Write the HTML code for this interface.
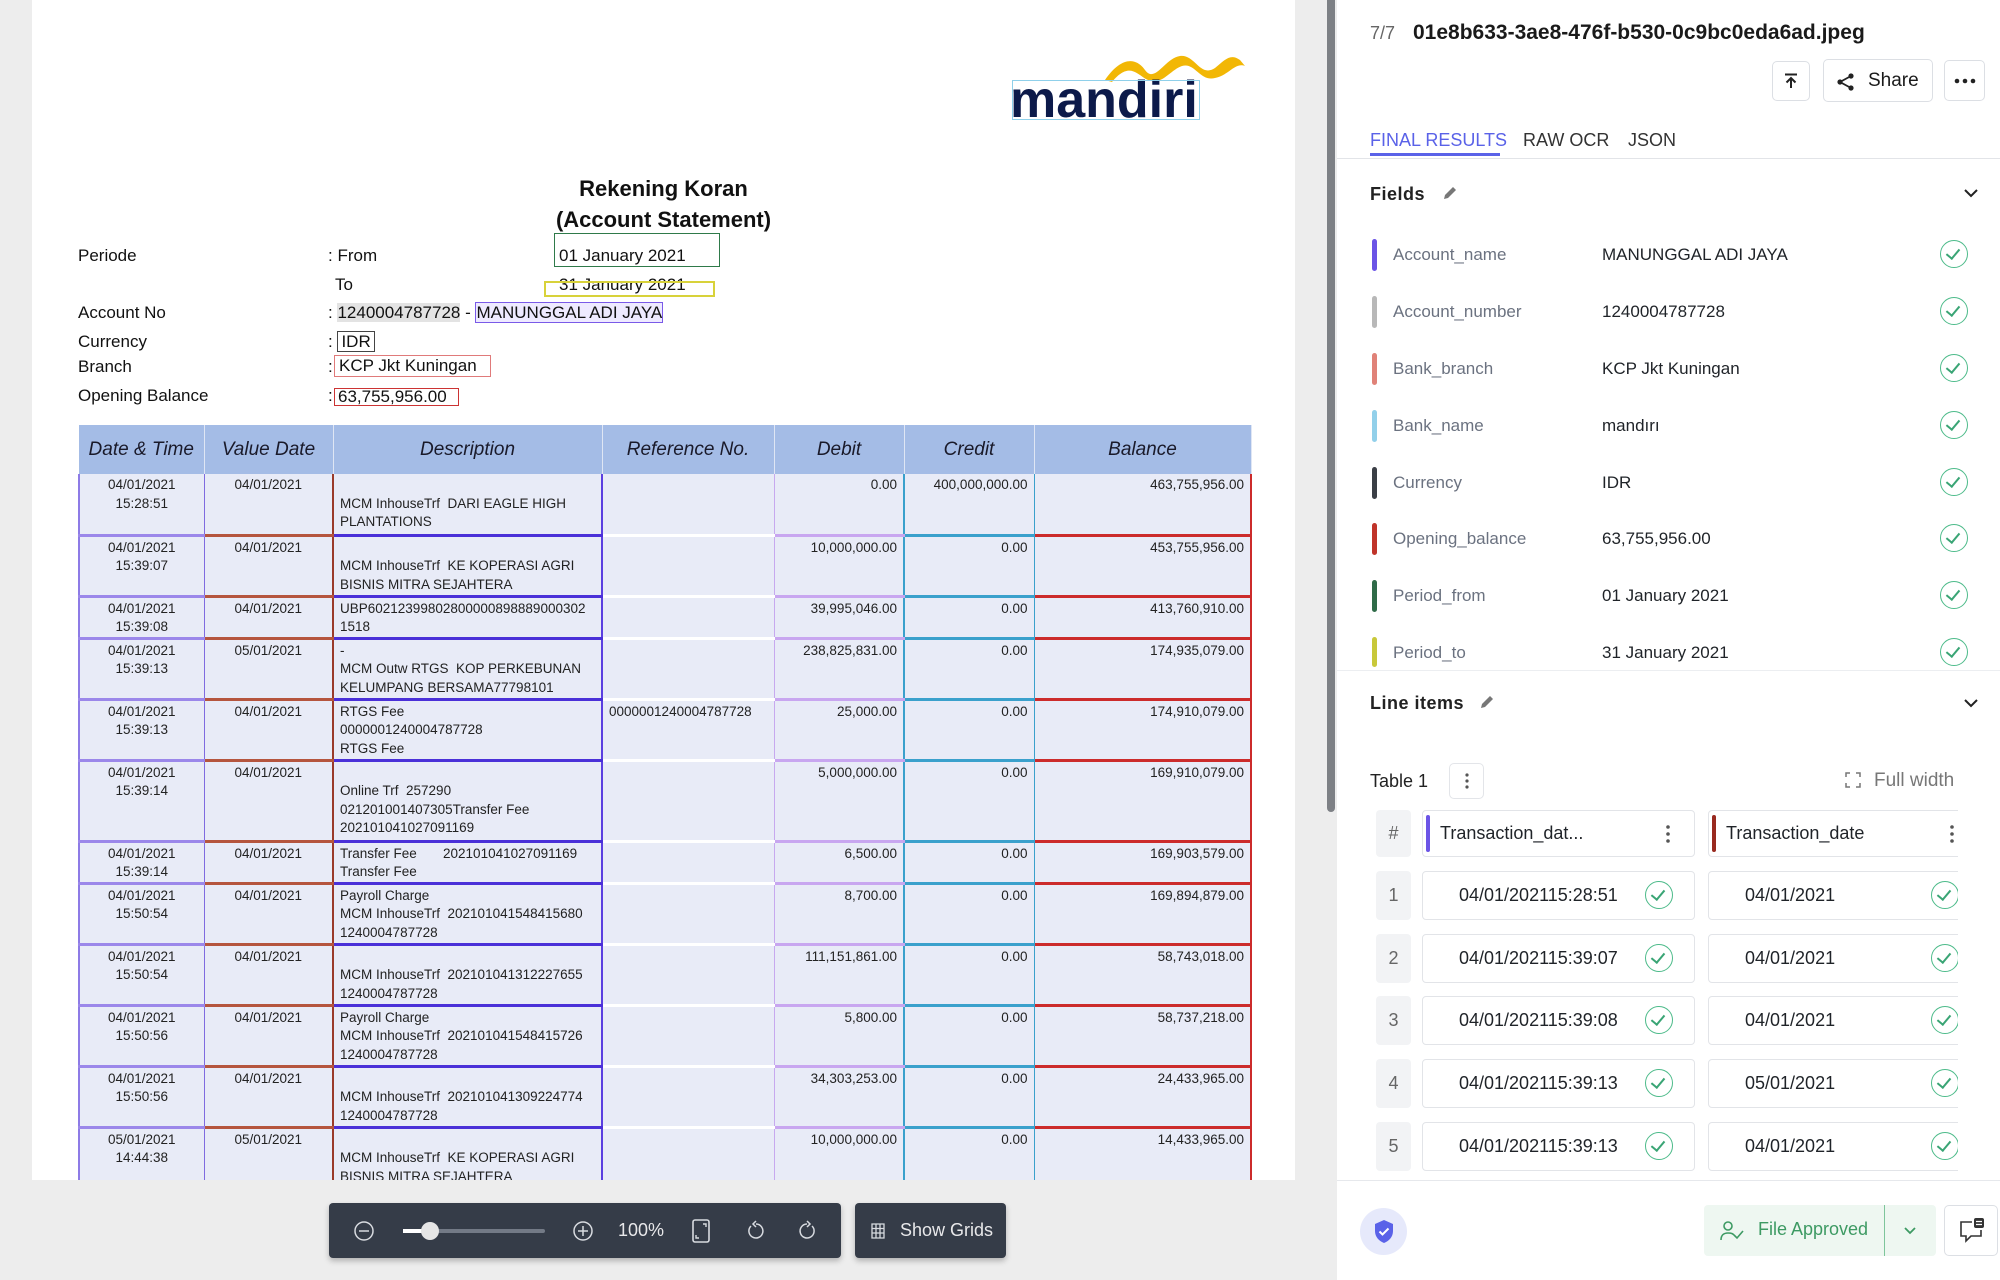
<!DOCTYPE html>
<html><head><meta charset="utf-8">
<style>
*{margin:0;padding:0;box-sizing:border-box}
body{width:2000px;height:1280px;background:#ededed;font-family:"Liberation Sans",sans-serif;position:relative;overflow:hidden}
.abs{position:absolute}
#page{position:absolute;left:32px;top:0;width:1263px;height:1180px;background:#fff;overflow:hidden}
.doc{font-family:"Liberation Sans",sans-serif;color:#111;font-size:17px;white-space:nowrap}
table.t{position:absolute;left:46px;top:425px;border-collapse:collapse;table-layout:fixed;width:1172px}
table.t th{background:#a4bce6;font-style:italic;font-weight:normal;font-size:19px;height:49px;color:#1a1a2a;border-right:1px solid #dfe6f4}
table.t td{background:#e8ebf7;vertical-align:top;font-size:13.5px;line-height:18.6px;padding:2px 6px 0 6px;color:#222;white-space:nowrap;overflow:hidden}
td.c1{text-align:center;border-left:2px solid #8d7be6;border-right:1px solid #7f6be0;border-bottom:3px solid #9b87ea}
td.c2{text-align:center;border-right:2px solid #9a3a2a;border-bottom:3px solid #b5553e}
td.c3{border-right:2px solid #5b3fe0;border-bottom:3px solid #4a30d8}
td.c4{border-right:1px solid #c7a9ef;border-bottom:3px solid #fff}
td.c5{text-align:right;border-right:2px solid #3aa0cc;border-bottom:3px solid #c8a6f0}
td.c6{text-align:right;border-right:1px solid #3aa0cc;border-bottom:3px solid #3aa0cc}
td.c7{text-align:right;border-right:2px solid #cc2b2b;border-bottom:3px solid #cc2b2b}
.rp{position:absolute;left:1337px;top:0;width:663px;height:1280px;background:#fff}
.lbl{position:absolute;left:56px;font-size:17px;color:#6b7280}
.val{position:absolute;left:265px;font-size:17px;color:#1f2328}
.bar{position:absolute;left:35px;width:5px;height:32px;border-radius:3px}
.chk{position:absolute;left:603px;width:28px;height:28px;border:1.5px solid #4dbb8a;border-radius:50%}
.chk:after{content:"";position:absolute;left:8px;top:5px;width:6px;height:11px;border-right:2px solid #3aa575;border-bottom:2px solid #3aa575;transform:rotate(40deg)}
.cell{position:absolute;height:49px;border:1.5px solid #e2e4e8;border-radius:4px;background:#fff;font-size:18px;color:#1f2328}
.num{position:absolute;left:39px;width:35px;height:49px;background:#f2f3f5;border-radius:4px;text-align:center;line-height:49px;color:#666;font-size:18px}
.btn{position:absolute;border:1.5px solid #dcdfe4;border-radius:5px;background:#fff}
</style></head><body>

<div id="page">
  <svg class="abs" style="left:1068px;top:48px" width="180" height="40" viewBox="0 0 180 40">
    <path d="M5 32 C20 10 35 8 45 22 C55 36 65 10 80 8 C95 6 100 30 115 20 C125 12 130 5 140 12 L145 18 C135 14 128 28 115 30 C100 34 95 14 82 18 C70 22 62 38 48 32 C38 28 30 12 12 34 Z" fill="#f2b705"/>
  </svg>
  <div class="abs" style="left:978px;top:70px;font-size:52px;font-weight:bold;color:#0c1a4a;letter-spacing:0px;transform:scaleX(1.0);transform-origin:left">mandiri</div>
  <div class="abs" style="left:980px;top:80px;width:188px;height:40px;border:1px solid #8fd0ea"></div>

  <div class="doc abs" style="left:0;width:1263px;text-align:center;top:176px;font-size:22px;font-weight:bold">Rekening Koran</div>
  <div class="doc abs" style="left:0;width:1263px;text-align:center;top:207px;font-size:22px;font-weight:bold">(Account Statement)</div>

  <div class="doc abs" style="left:46px;top:246px">Periode</div>
  <div class="doc abs" style="left:296px;top:246px">: From</div>
  <div class="doc abs" style="left:522px;top:233px;width:166px;height:34px;border:1.5px solid #2f7a4a"></div>
  <div class="doc abs" style="left:524px;top:246px;padding-left:3px">01 January 2021</div>
  <div class="doc abs" style="left:303px;top:275px">To</div>
  <div class="doc abs" style="left:527px;top:275px">31 January 2021</div>
  <div class="abs" style="left:512px;top:281px;width:171px;height:16px;border:2px solid #d8d23a"></div>

  <div class="doc abs" style="left:46px;top:303px">Account No</div>
  <div class="doc abs" style="left:296px;top:303px">: <span style="background:#e3e3e3">1240004787728</span> - <span style="border:1.5px solid #7a5ae8;background:#eeeaff">MANUNGGAL ADI JAYA</span></div>
  <div class="doc abs" style="left:46px;top:332px">Currency</div>
  <div class="doc abs" style="left:296px;top:332px">: <span style="border:1.5px solid #444;padding:0 3px">IDR</span></div>
  <div class="doc abs" style="left:46px;top:357px">Branch</div>
  <div class="doc abs" style="left:296px;top:357px">:</div>
  <div class="doc abs" style="left:302px;top:355px;width:157px;height:22px;border:1.5px solid #e07a7a;padding-left:4px">KCP Jkt Kuningan</div>
  <div class="doc abs" style="left:46px;top:386px">Opening Balance</div>
  <div class="doc abs" style="left:296px;top:386px">:</div>
  <div class="doc abs" style="left:302px;top:388px;width:125px;height:18px;border:1.5px solid #cc3333;line-height:15px;padding-left:3px">63,755,956.00</div>

  <table class="t">
    <colgroup><col style="width:125px"><col style="width:129px"><col style="width:269px"><col style="width:172px"><col style="width:130px"><col style="width:130px"><col style="width:217px"></colgroup>
    <tr><th>Date &amp; Time</th><th>Value Date</th><th>Description</th><th>Reference No.</th><th>Debit</th><th>Credit</th><th>Balance</th></tr>
    <tr style="height:61px"><td class="c1">04/01/2021<br>15:28:51</td><td class="c2">04/01/2021</td><td class="c3"><br>MCM InhouseTrf&nbsp; DARI EAGLE HIGH<br>PLANTATIONS</td><td class="c4"></td><td class="c5">0.00</td><td class="c6">400,000,000.00</td><td class="c7">463,755,956.00</td></tr>
    <tr style="height:61px"><td class="c1">04/01/2021<br>15:39:07</td><td class="c2">04/01/2021</td><td class="c3"><br>MCM InhouseTrf&nbsp; KE KOPERASI AGRI<br>BISNIS MITRA SEJAHTERA</td><td class="c4"></td><td class="c5">10,000,000.00</td><td class="c6">0.00</td><td class="c7">453,755,956.00</td></tr>
    <tr style="height:41px"><td class="c1">04/01/2021<br>15:39:08</td><td class="c2">04/01/2021</td><td class="c3">UBP60212399802800000898889000302<br>1518</td><td class="c4"></td><td class="c5">39,995,046.00</td><td class="c6">0.00</td><td class="c7">413,760,910.00</td></tr>
    <tr style="height:61px"><td class="c1">04/01/2021<br>15:39:13</td><td class="c2">05/01/2021</td><td class="c3">-<br>MCM Outw RTGS&nbsp; KOP PERKEBUNAN<br>KELUMPANG BERSAMA77798101</td><td class="c4"></td><td class="c5">238,825,831.00</td><td class="c6">0.00</td><td class="c7">174,935,079.00</td></tr>
    <tr style="height:61px"><td class="c1">04/01/2021<br>15:39:13</td><td class="c2">04/01/2021</td><td class="c3">RTGS Fee<br>0000001240004787728<br>RTGS Fee</td><td class="c4">0000001240004787728</td><td class="c5">25,000.00</td><td class="c6">0.00</td><td class="c7">174,910,079.00</td></tr>
    <tr style="height:81px"><td class="c1">04/01/2021<br>15:39:14</td><td class="c2">04/01/2021</td><td class="c3"><br>Online Trf&nbsp; 257290<br>021201001407305Transfer Fee<br>202101041027091169</td><td class="c4"></td><td class="c5">5,000,000.00</td><td class="c6">0.00</td><td class="c7">169,910,079.00</td></tr>
    <tr style="height:41px"><td class="c1">04/01/2021<br>15:39:14</td><td class="c2">04/01/2021</td><td class="c3">Transfer Fee&nbsp;&nbsp;&nbsp;&nbsp;&nbsp;&nbsp; 202101041027091169<br>Transfer Fee</td><td class="c4"></td><td class="c5">6,500.00</td><td class="c6">0.00</td><td class="c7">169,903,579.00</td></tr>
    <tr style="height:61px"><td class="c1">04/01/2021<br>15:50:54</td><td class="c2">04/01/2021</td><td class="c3">Payroll Charge<br>MCM InhouseTrf&nbsp; 202101041548415680<br>1240004787728</td><td class="c4"></td><td class="c5">8,700.00</td><td class="c6">0.00</td><td class="c7">169,894,879.00</td></tr>
    <tr style="height:61px"><td class="c1">04/01/2021<br>15:50:54</td><td class="c2">04/01/2021</td><td class="c3"><br>MCM InhouseTrf&nbsp; 202101041312227655<br>1240004787728</td><td class="c4"></td><td class="c5">111,151,861.00</td><td class="c6">0.00</td><td class="c7">58,743,018.00</td></tr>
    <tr style="height:61px"><td class="c1">04/01/2021<br>15:50:56</td><td class="c2">04/01/2021</td><td class="c3">Payroll Charge<br>MCM InhouseTrf&nbsp; 202101041548415726<br>1240004787728</td><td class="c4"></td><td class="c5">5,800.00</td><td class="c6">0.00</td><td class="c7">58,737,218.00</td></tr>
    <tr style="height:61px"><td class="c1">04/01/2021<br>15:50:56</td><td class="c2">04/01/2021</td><td class="c3"><br>MCM InhouseTrf&nbsp; 202101041309224774<br>1240004787728</td><td class="c4"></td><td class="c5">34,303,253.00</td><td class="c6">0.00</td><td class="c7">24,433,965.00</td></tr>
    <tr style="height:70px"><td class="c1">05/01/2021<br>14:44:38</td><td class="c2">05/01/2021</td><td class="c3"><br>MCM InhouseTrf&nbsp; KE KOPERASI AGRI<br>BISNIS MITRA SEJAHTERA</td><td class="c4"></td><td class="c5">10,000,000.00</td><td class="c6">0.00</td><td class="c7">14,433,965.00</td></tr>
  </table>
</div>

<div class="abs" style="left:329px;top:1203px;width:512px;height:55px;background:#353c48;border-radius:4px;box-shadow:0 3px 6px rgba(0,0,0,.25)">
  <svg class="abs" style="left:24px;top:17px" width="22" height="22"><circle cx="11" cy="11" r="9" fill="none" stroke="#d8dbe0" stroke-width="1.5"/><path d="M6 11h10" stroke="#d8dbe0" stroke-width="1.5"/></svg>
  <div class="abs" style="left:74px;top:26px;width:142px;height:4px;background:#737a86;border-radius:2px"></div>
  <div class="abs" style="left:74px;top:26px;width:20px;height:4px;background:#fff"></div>
  <div class="abs" style="left:92px;top:19px;width:18px;height:18px;border-radius:50%;background:#e6e6e6"></div>
  <svg class="abs" style="left:243px;top:17px" width="22" height="22"><circle cx="11" cy="11" r="9" fill="none" stroke="#d8dbe0" stroke-width="1.5"/><path d="M6 11h10M11 6v10" stroke="#d8dbe0" stroke-width="1.5"/></svg>
  <div class="abs" style="left:289px;top:17px;color:#e8e8ea;font-size:18px">100%</div>
  <svg class="abs" style="left:362px;top:15px" width="20" height="26"><rect x="2" y="2" width="16" height="22" rx="2" fill="none" stroke="#d8dbe0" stroke-width="1.6"/><path d="M12 6h3v3M8 20H5v-3" stroke="#d8dbe0" stroke-width="1.4" fill="none"/></svg>
  <svg class="abs" style="left:415px;top:16px" width="22" height="24"><path d="M7 7a7 7 0 1 0 5-2" fill="none" stroke="#d8dbe0" stroke-width="1.5"/><path d="M12 2l-3 3 3 3" fill="none" stroke="#d8dbe0" stroke-width="1.5"/></svg>
  <svg class="abs" style="left:468px;top:16px" width="22" height="24"><path d="M15 7a7 7 0 1 1-5-2" fill="none" stroke="#d8dbe0" stroke-width="1.5"/><path d="M10 2l3 3-3 3" fill="none" stroke="#d8dbe0" stroke-width="1.5"/></svg>
</div>
<div class="abs" style="left:855px;top:1203px;width:151px;height:55px;background:#353c48;border-radius:4px;box-shadow:0 3px 6px rgba(0,0,0,.25)">
  <svg class="abs" style="left:16px;top:20px" width="14" height="16"><path d="M1 1h12v14H1zM1 5.5h12M1 10h12M5 1v14M9 1v14" fill="none" stroke="#d8dbe0" stroke-width="1.3"/></svg>
  <div class="abs" style="left:45px;top:17px;color:#e8e8ea;font-size:18px">Show Grids</div>
</div>

<div class="abs" style="left:1327px;top:0;width:8px;height:812px;background:#7d8085;border-radius:0 0 4px 4px"></div>

<div class="rp">
  <div class="abs" style="left:33px;top:23px;font-size:18px;color:#666">7/7</div>
  <div class="abs" style="left:76px;top:21px;font-size:21px;font-weight:bold;color:#1a1a1a">01e8b633-3ae8-476f-b530-0c9bc0eda6ad.jpeg</div>
  <div class="btn" style="left:435px;top:61px;width:38px;height:40px">
    <svg class="abs" style="left:10px;top:11px" width="16" height="16"><path d="M2 1.5h12" stroke="#222" stroke-width="2"/><path d="M8 15V5M3.5 9.5L8 5l4.5 4.5" stroke="#222" stroke-width="2" fill="none"/></svg>
  </div>
  <div class="btn" style="left:486px;top:59px;width:110px;height:43px">
    <svg class="abs" style="left:12px;top:12px" width="20" height="20"><circle cx="15" cy="4" r="2.6" fill="#222"/><circle cx="4" cy="10" r="2.6" fill="#222"/><circle cx="15" cy="16" r="2.6" fill="#222"/><path d="M15 4L4 10l11 6" stroke="#222" stroke-width="1.8" fill="none"/></svg>
    <div class="abs" style="left:44px;top:10px;font-size:19px;color:#1a1a1a">Share</div>
  </div>
  <div class="btn" style="left:607px;top:60px;width:41px;height:41px">
    <svg class="abs" style="left:9px;top:17px" width="22" height="6"><circle cx="3" cy="3" r="2.3" fill="#222"/><circle cx="11" cy="3" r="2.3" fill="#222"/><circle cx="19" cy="3" r="2.3" fill="#222"/></svg>
  </div>

  <div class="abs" style="left:33px;top:130px;font-size:18px;color:#5a62e8">FINAL RESULTS</div>
  <div class="abs" style="left:33px;top:153px;width:130px;height:3px;background:#5a62e8"></div>
  <div class="abs" style="left:186px;top:130px;font-size:18px;color:#333">RAW OCR</div>
  <div class="abs" style="left:291px;top:130px;font-size:18px;color:#333">JSON</div>
  <div class="abs" style="left:0;top:158px;width:663px;height:1px;background:#e2e4e8"></div>

  <div class="abs" style="left:33px;top:184px;font-size:18px;font-weight:bold;color:#222;letter-spacing:.5px">Fields</div>
  <svg class="abs" style="left:104px;top:184px" width="18" height="18"><path d="M3 15l1-4 8-8 3 3-8 8z" fill="#777"/></svg>
  <svg class="abs" style="left:625px;top:186px" width="18" height="14"><path d="M3 4l6 6 6-6" stroke="#222" stroke-width="2" fill="none"/></svg>

  <div class="bar" style="top:239px;background:#6b54e6"></div><div class="lbl" style="top:245px">Account_name</div><div class="val" style="top:245px">MANUNGGAL ADI JAYA</div><div class="chk" style="top:240px"></div>
  <div class="bar" style="top:296px;background:#b8b8b8"></div><div class="lbl" style="top:302px">Account_number</div><div class="val" style="top:302px">1240004787728</div><div class="chk" style="top:297px"></div>
  <div class="bar" style="top:353px;background:#e08278"></div><div class="lbl" style="top:359px">Bank_branch</div><div class="val" style="top:359px">KCP Jkt Kuningan</div><div class="chk" style="top:354px"></div>
  <div class="bar" style="top:410px;background:#92d0ea"></div><div class="lbl" style="top:416px">Bank_name</div><div class="val" style="top:416px">mandırı</div><div class="chk" style="top:411px"></div>
  <div class="bar" style="top:467px;background:#3b3f46"></div><div class="lbl" style="top:473px">Currency</div><div class="val" style="top:473px">IDR</div><div class="chk" style="top:468px"></div>
  <div class="bar" style="top:523px;background:#c0342a"></div><div class="lbl" style="top:529px">Opening_balance</div><div class="val" style="top:529px">63,755,956.00</div><div class="chk" style="top:524px"></div>
  <div class="bar" style="top:580px;background:#2f6b48"></div><div class="lbl" style="top:586px">Period_from</div><div class="val" style="top:586px">01 January 2021</div><div class="chk" style="top:581px"></div>
  <div class="bar" style="top:637px;background:#c8c83a;height:30px"></div><div class="lbl" style="top:643px">Period_to</div><div class="val" style="top:643px">31 January 2021</div><div class="chk" style="top:638px"></div>
  <div class="abs" style="left:0;top:670px;width:663px;height:1px;background:#eceef1"></div>

  <div class="abs" style="left:33px;top:693px;font-size:18px;font-weight:bold;color:#222;letter-spacing:.5px">Line items</div>
  <svg class="abs" style="left:141px;top:693px" width="18" height="18"><path d="M3 15l1-4 8-8 3 3-8 8z" fill="#777"/></svg>
  <svg class="abs" style="left:625px;top:696px" width="18" height="14"><path d="M3 4l6 6 6-6" stroke="#222" stroke-width="2" fill="none"/></svg>

  <div class="abs" style="left:33px;top:771px;font-size:18px;color:#222">Table 1</div>
  <div class="btn" style="left:112px;top:763px;width:35px;height:36px;border-color:#e3e5e9">
    <svg class="abs" style="left:15px;top:9px" width="4" height="16"><circle cx="2" cy="2" r="1.6" fill="#555"/><circle cx="2" cy="8" r="1.6" fill="#555"/><circle cx="2" cy="14" r="1.6" fill="#555"/></svg>
  </div>
  <svg class="abs" style="left:508px;top:772px" width="16" height="16"><path d="M1 5V1h4M11 1h4v4M15 11v4h-4M5 15H1v-4" stroke="#777" stroke-width="1.5" fill="none"/></svg>
  <div class="abs" style="left:537px;top:770px;font-size:19px;color:#777">Full width</div>

  <div class="num" style="top:810px;height:47px;line-height:47px">#</div>
  <div class="cell" style="left:85px;top:810px;width:273px;height:47px">
    <div class="abs" style="left:3px;top:4px;width:4px;height:37px;background:#6b54e6;border-radius:2px"></div>
    <div class="abs" style="left:17px;top:12px">Transaction_dat...</div>
    <svg class="abs" style="left:243px;top:14px" width="4" height="18"><circle cx="2" cy="2" r="1.8" fill="#555"/><circle cx="2" cy="9" r="1.8" fill="#555"/><circle cx="2" cy="16" r="1.8" fill="#555"/></svg>
  </div>
  <div style="position:absolute;left:371px;top:800px;width:250px;height:380px;overflow:hidden">
    <div class="cell" style="left:0;top:10px;width:280px;height:47px">
      <div class="abs" style="left:3px;top:4px;width:4px;height:37px;background:#992a20;border-radius:2px"></div>
      <div class="abs" style="left:17px;top:12px">Transaction_date</div>
      <svg class="abs" style="left:241px;top:14px" width="4" height="18"><circle cx="2" cy="2" r="1.8" fill="#555"/><circle cx="2" cy="9" r="1.8" fill="#555"/><circle cx="2" cy="16" r="1.8" fill="#555"/></svg>
    </div>
    <div class="cell" style="left:0;top:71px;width:280px"><div class="abs" style="left:36px;top:13px">04/01/2021</div><div class="chk" style="left:222px;top:9px"></div></div>
    <div class="cell" style="left:0;top:134px;width:280px"><div class="abs" style="left:36px;top:13px">04/01/2021</div><div class="chk" style="left:222px;top:9px"></div></div>
    <div class="cell" style="left:0;top:196px;width:280px"><div class="abs" style="left:36px;top:13px">04/01/2021</div><div class="chk" style="left:222px;top:9px"></div></div>
    <div class="cell" style="left:0;top:259px;width:280px"><div class="abs" style="left:36px;top:13px">05/01/2021</div><div class="chk" style="left:222px;top:9px"></div></div>
    <div class="cell" style="left:0;top:322px;width:280px"><div class="abs" style="left:36px;top:13px">04/01/2021</div><div class="chk" style="left:222px;top:9px"></div></div>
  </div>

  <div class="num" style="top:871px">1</div>
  <div class="cell" style="left:85px;top:871px;width:273px"><div class="abs" style="left:36px;top:13px">04/01/202115:28:51</div><div class="chk" style="left:222px;top:9px"></div></div>
  <div class="num" style="top:934px">2</div>
  <div class="cell" style="left:85px;top:934px;width:273px"><div class="abs" style="left:36px;top:13px">04/01/202115:39:07</div><div class="chk" style="left:222px;top:9px"></div></div>
  <div class="num" style="top:996px">3</div>
  <div class="cell" style="left:85px;top:996px;width:273px"><div class="abs" style="left:36px;top:13px">04/01/202115:39:08</div><div class="chk" style="left:222px;top:9px"></div></div>
  <div class="num" style="top:1059px">4</div>
  <div class="cell" style="left:85px;top:1059px;width:273px"><div class="abs" style="left:36px;top:13px">04/01/202115:39:13</div><div class="chk" style="left:222px;top:9px"></div></div>
  <div class="num" style="top:1122px">5</div>
  <div class="cell" style="left:85px;top:1122px;width:273px"><div class="abs" style="left:36px;top:13px">04/01/202115:39:13</div><div class="chk" style="left:222px;top:9px"></div></div>

  <div class="abs" style="left:0;top:1180px;width:663px;height:100px;background:#fff;border-top:1px solid #e6e8ec"></div>
  <div class="abs" style="left:23px;top:1208px;width:47px;height:47px;border-radius:50%;background:#e6e9fb">
    <svg class="abs" style="left:13px;top:11px" width="22" height="25"><path d="M11 1L2 5v7c0 6 4 10 9 12 5-2 9-6 9-12V5z" fill="#5a62e8"/><path d="M6.5 12.5l3 3 6-6" stroke="#fff" stroke-width="2" fill="none"/></svg>
  </div>
  <div class="abs" style="left:367px;top:1205px;width:232px;height:51px;background:#eef7f1;border-radius:4px">
    <svg class="abs" style="left:16px;top:15px" width="24" height="22"><circle cx="8" cy="6" r="4" fill="none" stroke="#3d9a63" stroke-width="1.6"/><path d="M1 20c0-5 3-7 7-7s5 1 6 2" fill="none" stroke="#3d9a63" stroke-width="1.6"/><path d="M14 15l3 3 6-7" fill="none" stroke="#3d9a63" stroke-width="1.6"/></svg>
    <div class="abs" style="left:54px;top:14px;font-size:18px;color:#3d9a63">File Approved</div>
    <div class="abs" style="left:180px;top:0;width:1px;height:51px;background:#7ec59b"></div>
    <svg class="abs" style="left:199px;top:20px" width="14" height="12"><path d="M2 3l5 5 5-5" stroke="#3d9a63" stroke-width="1.8" fill="none"/></svg>
  </div>
  <div class="btn" style="left:607px;top:1205px;width:54px;height:51px">
    <svg class="abs" style="left:13px;top:11px" width="28" height="28"><path d="M14 5H3v14h5v5l5-5h10v-6" fill="none" stroke="#333" stroke-width="1.6"/><rect x="16" y="1" width="10" height="10" rx="2" fill="#333"/><path d="M18 4.5h6M18 7.5h6" stroke="#fff" stroke-width="1.2"/></svg>
  </div>
</div>
</body></html>
